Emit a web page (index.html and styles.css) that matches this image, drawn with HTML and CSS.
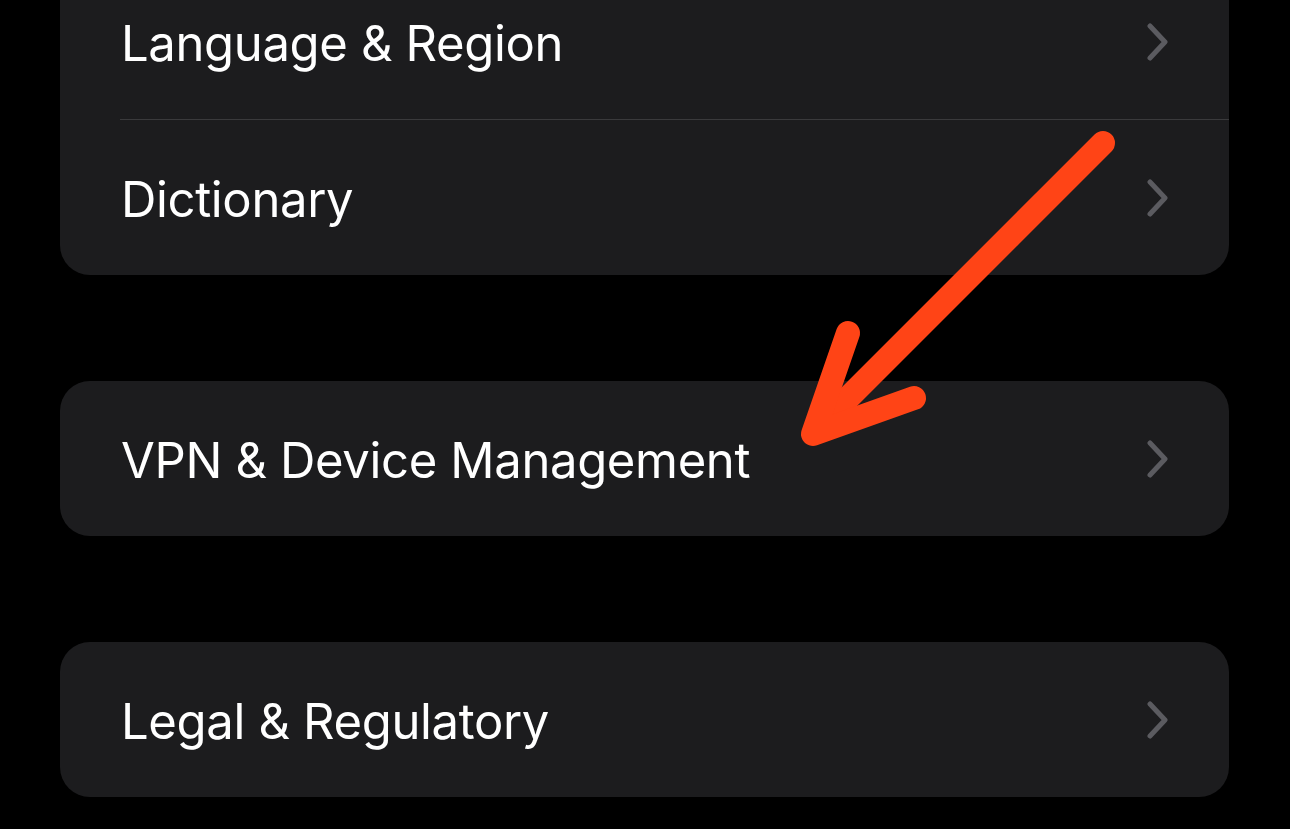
FILE: index.html
```html
<!DOCTYPE html>
<html lang="en">
<head>
<meta charset="utf-8">
<title>Settings</title>
<link rel="stylesheet" href="styles.css">
</head>
<body>
<main class="screen">
  <section class="group group-first">
    <div class="row">
      <span class="label">Language &amp; Region</span>
      <svg class="chev" viewBox="0 0 22 38" width="22" height="38"><path d="M3 3 L18 19 L3 35" /></svg>
    </div>
    <div class="sep"></div>
    <div class="row">
      <span class="label">Dictionary</span>
      <svg class="chev" viewBox="0 0 22 38" width="22" height="38"><path d="M3 3 L18 19 L3 35" /></svg>
    </div>
  </section>
  <section class="group">
    <div class="row">
      <span class="label">VPN &amp; Device Management</span>
      <svg class="chev" viewBox="0 0 22 38" width="22" height="38"><path d="M3 3 L18 19 L3 35" /></svg>
    </div>
  </section>
  <section class="group">
    <div class="row">
      <span class="label">Legal &amp; Regulatory</span>
      <svg class="chev" viewBox="0 0 22 38" width="22" height="38"><path d="M3 3 L18 19 L3 35" /></svg>
    </div>
  </section>
  <svg class="annot" viewBox="0 0 1290 829" width="1290" height="829">
    <line x1="1103" y1="143" x2="818" y2="428" />
    <polyline points="848,333 813,434 914,398" />
  </svg>
</main>
</body>
</html>
```

FILE: styles.css
```css
html, body {
  margin: 0;
  padding: 0;
  background: #000;
  height: 100%;
  overflow: hidden;
}

.screen {
  position: relative;
  width: 1290px;
  height: 829px;
  padding: 0 61px 0 60px;
  box-sizing: border-box;
  display: flex;
  flex-direction: column;
  gap: 106px;
  font-family: "Inter", "Noto Sans", sans-serif;
  color: #fff;
}

.group {
  background: #1c1c1e;
  border-radius: 30px;
  display: flex;
  flex-direction: column;
}

.group-first {
  margin-top: -36px;
}

.row {
  height: 155px;
  display: flex;
  align-items: center;
  justify-content: space-between;
  padding: 0 61px 0 61px;
  box-sizing: border-box;
}

.label {
  font-size: 49px;
  letter-spacing: -0.35px;
  font-weight: 400;
  line-height: 1;
  padding-top: 4px;
}

.sep {
  height: 1px;
  margin-left: 60px;
  background: #3a3a3c;
}

.chev {
  flex: none;
  margin-right: -1px;
}

.chev path {
  fill: none;
  stroke: #5b5b60;
  stroke-width: 5;
  stroke-linecap: round;
  stroke-linejoin: round;
}

.annot {
  position: absolute;
  left: 0;
  top: 0;
  pointer-events: none;
}

.annot line,
.annot polyline {
  fill: none;
  stroke: #ff4416;
  stroke-width: 24;
  stroke-linecap: round;
  stroke-linejoin: round;
}
```
